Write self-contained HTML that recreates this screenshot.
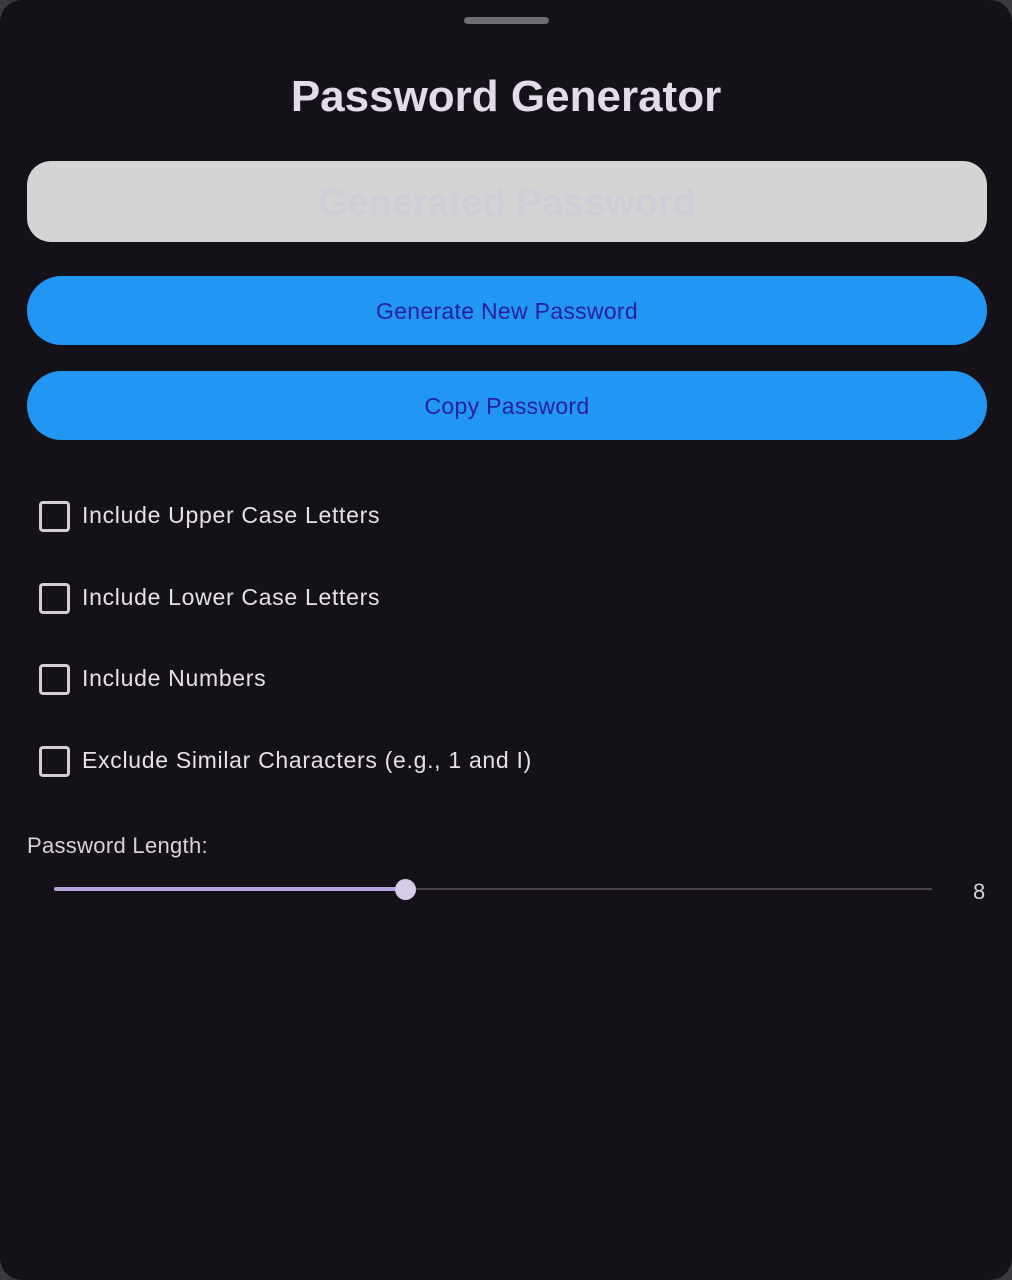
<!DOCTYPE html>
<html><head><style>
html,body{margin:0;padding:0;background:#3a3a3e;}
body{width:1012px;height:1280px;position:relative;overflow:hidden;font-family:"Liberation Sans",sans-serif;}
.panel{position:absolute;left:0;top:0;width:1012px;height:1280px;background:#141218;border-radius:22px;}
.handle{position:absolute;left:464px;top:17px;width:85px;height:7px;border-radius:4px;background:#6f6c74;}
.title{position:absolute;left:0;width:1012px;top:72px;text-align:center;font-size:44px;font-weight:bold;color:#e2dce8;}
.field{position:absolute;left:27px;top:161px;width:960px;height:81px;border-radius:24px;background:#d4d4d4;text-align:center;line-height:84px;font-size:38px;font-weight:bold;color:#d0ccd8;}
.btn{position:absolute;left:27px;width:960px;height:69px;border-radius:35px;background:#2196f3;text-align:center;line-height:71px;font-size:23px;color:#2a1f9a;letter-spacing:0.3px;}
.cb{position:absolute;left:39px;width:25px;height:25px;border:3px solid #d2cdd6;border-radius:4px;}
.lbl{position:absolute;left:82px;font-size:23px;color:#e6e0e9;letter-spacing:0.7px;}
</style></head><body>
<div class="panel">
<div class="handle"></div>
<div class="title">Password Generator</div>
<div class="field">Generated Password</div>
<div class="btn" style="top:276px">Generate New Password</div>
<div class="btn" style="top:371px">Copy Password</div>
<div class="cb" style="top:501px"></div><div class="lbl" style="top:502px">Include Upper Case Letters</div>
<div class="cb" style="top:583px"></div><div class="lbl" style="top:584px">Include Lower Case Letters</div>
<div class="cb" style="top:664px"></div><div class="lbl" style="top:665px">Include Numbers</div>
<div class="cb" style="top:746px"></div><div class="lbl" style="top:747px">Exclude Similar Characters (e.g., 1 and I)</div>
<div style="position:absolute;left:27px;top:833px;font-size:22px;color:#d8d2dc;letter-spacing:0.3px">Password Length:</div>
<div style="position:absolute;left:54px;top:887px;width:351px;height:4px;border-radius:2px;background:#d0bcff;opacity:.85"></div>
<div style="position:absolute;left:405px;top:888px;width:527px;height:2px;background:#4a4550"></div>
<div style="position:absolute;left:395px;top:879px;width:21px;height:21px;border-radius:50%;background:#d6cbe8"></div>
<div style="position:absolute;left:973px;top:879px;font-size:22px;color:#d8d2dc">8</div>
</div>
</body></html>
